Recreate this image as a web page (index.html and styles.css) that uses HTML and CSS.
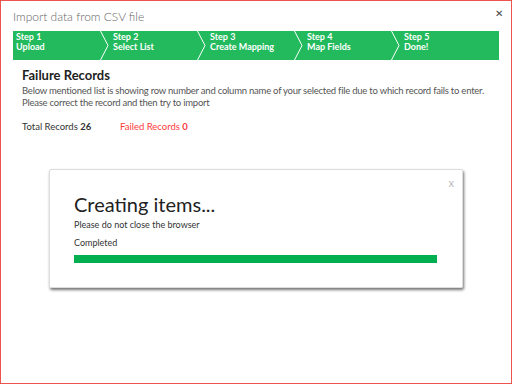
FILE: index.html
```html
<!DOCTYPE html>
<html lang="en">
<head>
    <meta charset="UTF-8">
    <title>Import data from CSV file</title>
    <link rel="stylesheet" href="styles.css">
</head>
<body>
    <div class="dialog">
        <div class="dialog-header">
            <span class="dialog-title">Import data from CSV file</span>
            <span class="dialog-close">&#x2715;</span>
        </div>

        <div class="steps">
            <div class="step step-first">
                <div class="step-text">Step 1<br>Upload</div>
            </div>
            <div class="step">
                <svg class="chevron" width="9" height="29" viewBox="0 0 9 29"><polyline points="0.5,0 8,14.5 0.5,29" fill="none" stroke="#fff" stroke-width="1"/></svg>
                <div class="step-text">Step 2<br>Select List</div>
            </div>
            <div class="step">
                <svg class="chevron" width="9" height="29" viewBox="0 0 9 29"><polyline points="0.5,0 8,14.5 0.5,29" fill="none" stroke="#fff" stroke-width="1"/></svg>
                <div class="step-text">Step 3<br>Create Mapping</div>
            </div>
            <div class="step">
                <svg class="chevron" width="9" height="29" viewBox="0 0 9 29"><polyline points="0.5,0 8,14.5 0.5,29" fill="none" stroke="#fff" stroke-width="1"/></svg>
                <div class="step-text">Step 4<br>Map Fields</div>
            </div>
            <div class="step step-last">
                <svg class="chevron" width="9" height="29" viewBox="0 0 9 29"><polyline points="0.5,0 8,14.5 0.5,29" fill="none" stroke="#fff" stroke-width="1"/></svg>
                <div class="step-text">Step 5<br>Done!</div>
            </div>
        </div>

        <div class="failures">
            <h2>Failure Records</h2>
            <p class="failures-desc">Below mentioned list is showing row number and column name of your selected file due to which record fails to enter.<br>Please correct the record and then try to import</p>
            <div class="totals">
                <span class="total">Total Records <b>26</b></span>
                <span class="failed">Failed Records <b>0</b></span>
            </div>
        </div>

        <div class="progress-wrap">
            <div class="progress-box">
                <span class="progress-close">x</span>
                <h1>Creating items...</h1>
                <p class="progress-note">Please do not close the browser</p>
                <p class="progress-label">Completed</p>
                <div class="progress-track">
                    <div class="progress-fill" style="width: 100%"></div>
                </div>
            </div>
        </div>
    </div>
</body>
</html>
```

FILE: styles.css
```css
:root {
    --border-red: #ef5350;
    --step-green: #22ba5c;
    --bar-green: #00b050;
    --text-dark: #222;
    --text-gray: #555;
    --failed-red: #ff3b3b;
}

html, body {
    margin: 0;
    padding: 0;
}

body {
    font-family: Lato, "Open Sans", sans-serif;
    background: #fff;
    color: var(--text-dark);
}

.dialog {
    width: 512px;
    height: 384px;
    box-sizing: border-box;
    border: 1px solid var(--border-red);
}

.dialog-header {
    display: flex;
    justify-content: space-between;
    align-items: center;
    padding: 3px 8px 0 12px;
    height: 27px;
    box-sizing: border-box;
}

.dialog-title {
    font-size: 12px;
    font-weight: 300;
    color: #666;
}

.dialog-close {
    font-size: 10px;
    color: #444;
    margin-top: -6px;
}

.steps {
    display: flex;
    margin: 3px 12px 0 12px;
    height: 29px;
    background: var(--step-green);
    color: #fff;
}

.step {
    display: flex;
    width: 97px;
    flex-shrink: 0;
}

.step-first {
    width: 87px;
}

.step-last {
    flex: 1;
}

.chevron {
    display: block;
    flex-shrink: 0;
}

.step-text {
    font-size: 9px;
    font-weight: 700;
    line-height: 10px;
    padding: 1px 0 0 4px;
    white-space: nowrap;
}

.step-first .step-text {
    padding-left: 3px;
}

.failures {
    padding: 6px 12px 0 21px;
}

.failures h2 {
    margin: 0;
    font-size: 13px;
    font-weight: 700;
    line-height: 18px;
}

.failures-desc {
    margin: 1px 0 0 0;
    font-size: 9.5px;
    line-height: 12px;
    letter-spacing: -0.23px;
    white-space: nowrap;
    color: var(--text-gray);
}

.totals {
    display: flex;
    margin-top: 12px;
    font-size: 9.5px;
    line-height: 12px;
}

.total {
    width: 98px;
    color: #333;
}

.failed {
    color: var(--failed-red);
}

.progress-wrap {
    display: flex;
    justify-content: center;
    padding-top: 36px;
}

.progress-box {
    position: relative;
    width: 414px;
    height: 119px;
    border: 1px solid #ddd;
    border-radius: 2px;
    box-shadow: 1px 2px 3px rgba(0, 0, 0, 0.55);
    padding: 20px 24px 0 24px;
    box-sizing: border-box;
}

.progress-close {
    position: absolute;
    top: 6px;
    right: 8px;
    font-size: 11px;
    color: #bbb;
}

.progress-box h1 {
    margin: 0;
    font-size: 20px;
    font-weight: 400;
    line-height: 28px;
    color: #222;
}

.progress-note {
    margin: 1px 0 0 0;
    font-size: 9px;
    line-height: 12px;
    color: #333;
}

.progress-label {
    margin: 6px 0 0 0;
    font-size: 9px;
    line-height: 12px;
    color: #333;
}

.progress-track {
    margin-top: 6px;
    width: 363px;
    height: 8px;
}

.progress-fill {
    height: 100%;
    background: var(--bar-green);
}
```
